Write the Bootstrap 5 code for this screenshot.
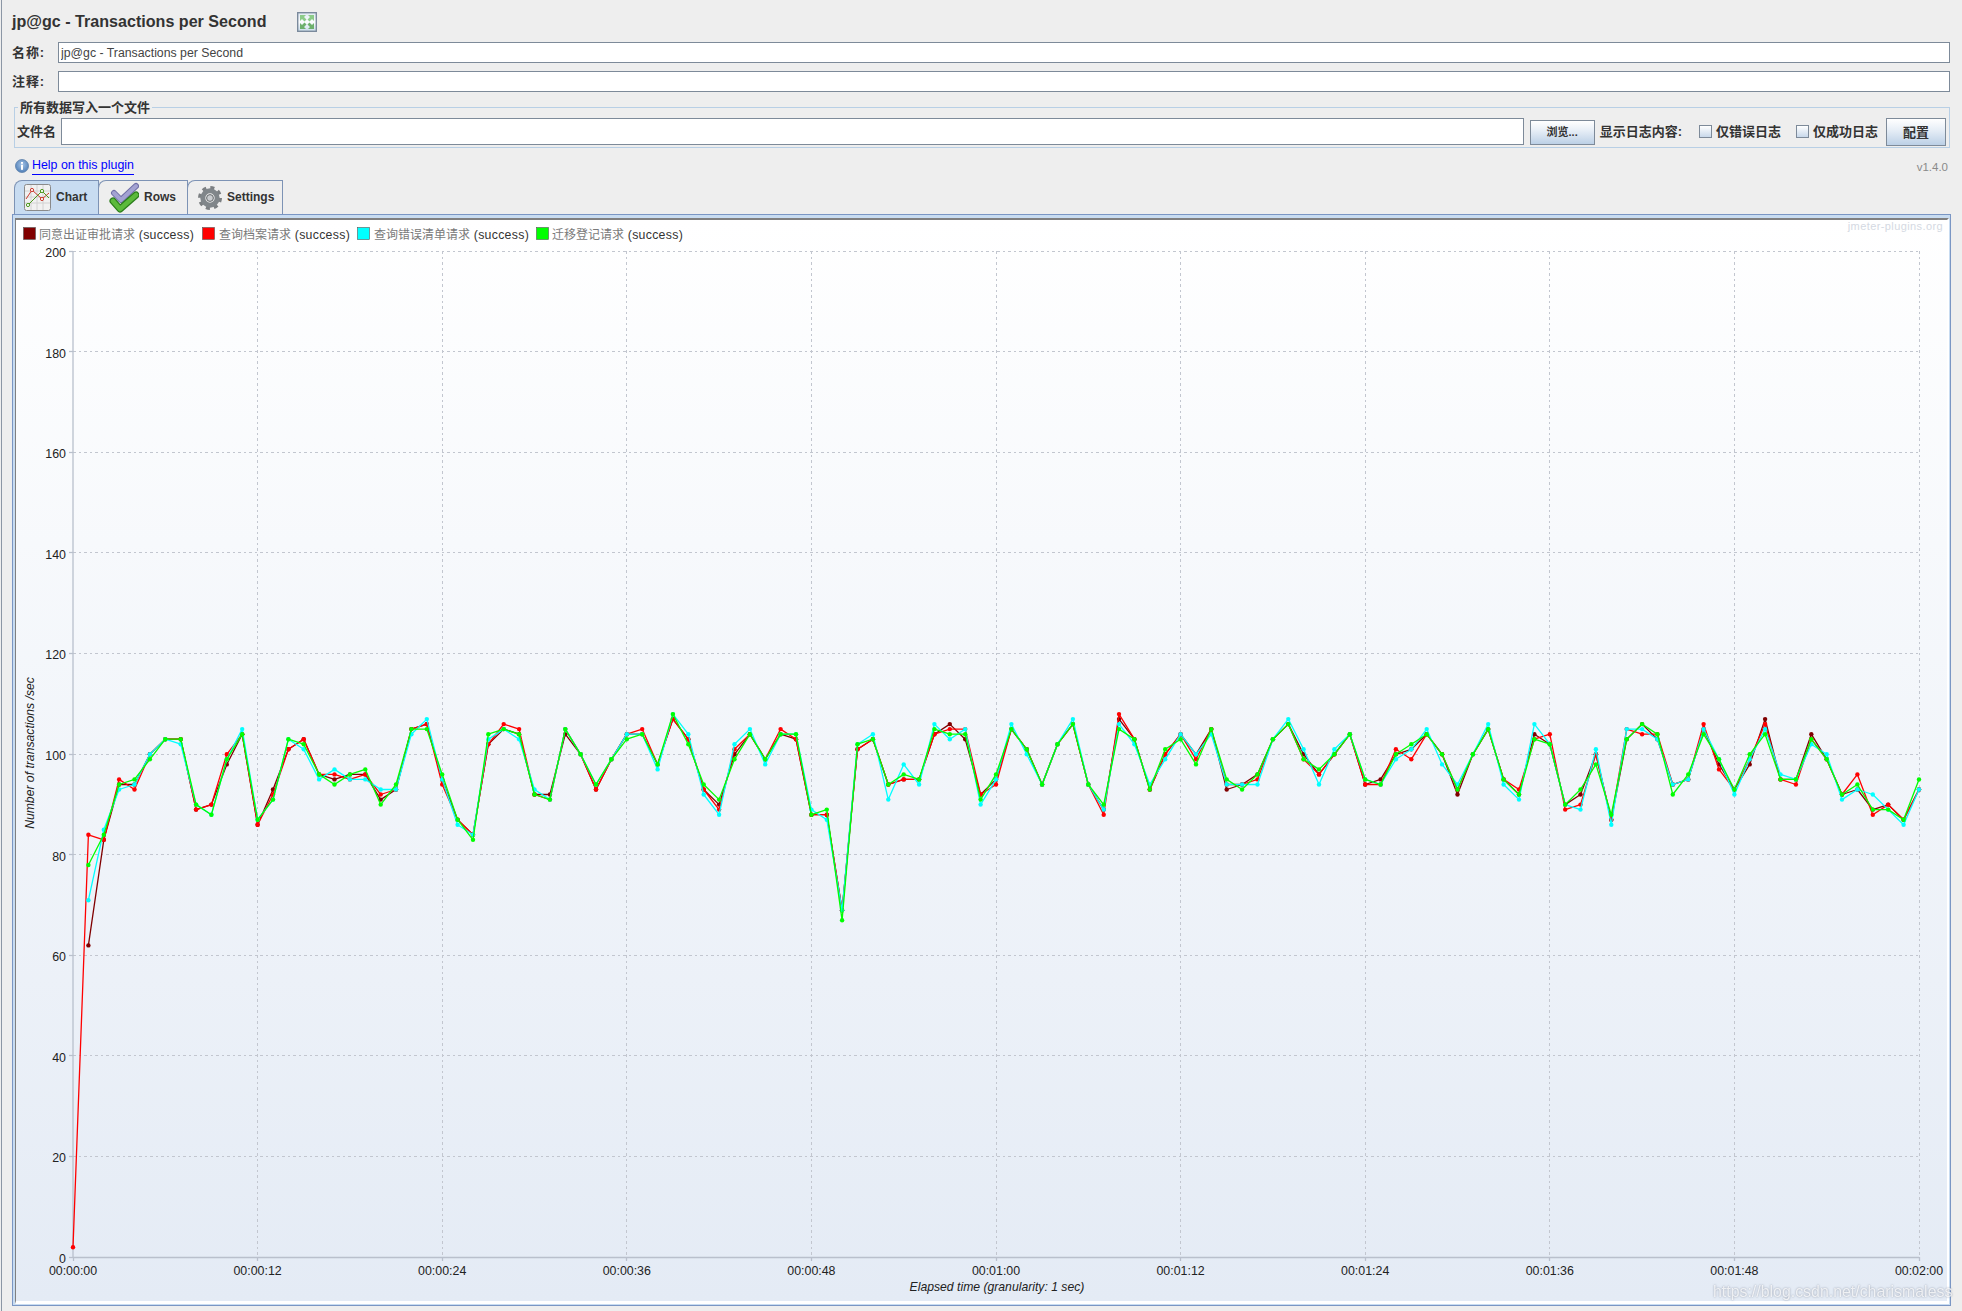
<!DOCTYPE html>
<html lang="zh-CN">
<head>
<meta charset="utf-8">
<title>jp@gc - Transactions per Second</title>
<link href="https://cdn.jsdelivr.net/npm/bootstrap@5.3.0/dist/css/bootstrap.min.css" rel="stylesheet">
<style>
:root{--ui-font:"Liberation Sans","Noto Sans CJK SC",sans-serif}
html,body{height:100%}
body{background:#eee;color:#333;font-family:var(--ui-font);font-size:12px;overflow:hidden;line-height:1.2}
.app-shell{height:1311px;margin-left:1px;border-left:1px solid #8b96a5;padding-left:10px}
.title-row{height:42px;gap:31px;padding-top:1px}
.plugin-title{font-size:16.1px;font-weight:700;margin:0;color:#333}
.expand-icon{width:20px;height:20px;display:block}
.field-row{height:21px;margin-right:12px}
.field-row + .field-row{margin-top:8px}
.field-label{width:46px;font-weight:700;font-size:13px;letter-spacing:.9px;flex:none}
.swing-input.form-control{border:1px solid #7d8a99;border-radius:0;padding:0 2px;height:100%;font-size:12.3px;color:#444;background:#fff;min-height:0;box-shadow:none;font-family:var(--ui-font);line-height:1}
.file-box{position:relative;height:41px;margin:15px 12px 0 2px;border:1px solid #b8cfe5;padding:8px 2px 0 2px;gap:0}
.file-legend{position:absolute;left:3px;top:-8px;padding:0 2px;background:#eee;font-size:13px;font-weight:700;line-height:15px;color:#333}
.file-label{font-size:13px;font-weight:700;width:44px;flex:none}
.swing-input.file-input{height:27px;flex:1 1 auto;width:auto}
.swing-btn.btn{border:1px solid #7d8a99;border-radius:0;padding:0;color:#333;background:linear-gradient(#fff 0%,#e8eff7 40%,#bcd0e6 100%);font-weight:700;font-family:var(--ui-font);line-height:1}
.browse-btn.btn{width:65px;height:25px;font-size:11px;margin-left:6px;margin-right:5px;margin-top:2px}
.config-btn.btn{width:60px;height:28px;font-size:13px;margin-left:8px;margin-right:1px;margin-top:1px}
.log-label{font-size:13px;font-weight:700;white-space:nowrap;color:#333}
.log-check{width:13px;height:13px;flex:none;border:1px solid #7d8a99;background:linear-gradient(#fff,#c8d8ea);margin:0 4px 0 0;border-radius:0;appearance:none;display:block}
.log-check-first{margin-left:17px}
.log-check-second{margin-left:15px}
.help-row{height:32px;margin-right:14px;padding-left:3px}
.info-icon{width:14px;height:14px;margin-top:3px;margin-right:3px;display:block}
.help-link{color:#00f;font-size:12.4px;text-decoration:none;border-bottom:1px solid #00f;padding-bottom:2px;line-height:14px;margin-top:4px}
.help-link:hover{color:#00f}
.version-tag{color:#8a8a8a;font-size:11.5px;margin-top:7px}
.tab-strip{height:34px;padding-left:3px;flex-wrap:nowrap}
.swing-tab{display:flex;align-items:center;height:34px;border:1px solid #7d93b5;border-bottom:0;border-top-left-radius:8px;background:#eee;color:#333;font-weight:700;font-size:12px;text-decoration:none;gap:5px;margin-left:-1px}
.swing-tab:hover{color:#333}
.swing-tab.is-active{background:#c8dcf1}
.tab-chart{width:85px;padding-left:9px}
.tab-rows{width:90px;padding-left:10px}
.tab-settings{width:96px;padding-left:10px}
.tab-panel{flex:1 1 auto;min-height:0;margin:0 11px 5px 0;border:1px solid #7a96c4;padding:3px 1px 1px 2px;background:#c8dcf1}
.chart-frame{height:100%;border-top:2px solid #808080;border-left:1px solid #808080;border-right:2px solid #fff;border-bottom:3px solid #fff;background:#fff;overflow:hidden}
.chart-svg{display:block;width:1931px;height:1081px;font-family:var(--ui-font)}
.grid-line{stroke:#c2c6cf;stroke-width:1;stroke-dasharray:2.5 3;shape-rendering:crispEdges}
.axis-line{stroke:#b9c0cc;stroke-width:1.3}
.tick-text{font-size:12.4px;fill:#222}
.axis-title{font-size:12.2px;font-style:italic;fill:#222}
.legend-cjk{font-size:12px;fill:#7a7a7a}
.legend-latin{font-size:12.3px;fill:#333;letter-spacing:.3px}
.plugins-mark{font-size:11px;fill:#d4d9e2;letter-spacing:.4px}
.csdn-mark{position:fixed;left:1713px;top:1282px;font-size:15.9px;color:rgba(255,255,255,.8);text-shadow:0 0 2px rgba(105,115,135,.75);white-space:nowrap;line-height:20px;pointer-events:none}
</style>
</head>
<body>
<div class="app-shell d-flex flex-column">
  <div class="title-row d-flex align-items-center">
    <h1 class="plugin-title">jp@gc - Transactions per Second</h1>
    <svg class="expand-icon" viewBox="0 0 20 20" aria-hidden="true">
      <defs><linearGradient id="expandBg" x1="0" y1="0" x2="0" y2="1"><stop offset="0" stop-color="#dfe9f2"/><stop offset=".5" stop-color="#fbfdfe"/><stop offset="1" stop-color="#c9dcea"/></linearGradient></defs>
      <rect x=".7" y=".7" width="18.6" height="18.6" fill="url(#expandBg)" stroke="#7b8a9c" stroke-width="1.4"/>
      <g fill="#8ccb88">
        <path d="M3 3h6l-2 2 2.500 2.500-2 2L5 7 3 9z"/>
        <path d="M17 3h-6l2 2-2.500 2.500 2 2L15 7l2 2z"/>
      </g>
      <g fill="#6db06c">
        <path d="M3 17h6l-2-2 2.500-2.500-2-2L5 13l-2-2z"/>
        <path d="M17 17h-6l2-2-2.500-2.500 2-2L15 13l2-2z"/>
      </g>
    </svg>
  </div>

  <div class="field-row d-flex align-items-center">
    <label class="field-label" for="nameField">名称:</label>
    <input id="nameField" class="form-control swing-input" type="text" value="jp@gc - Transactions per Second">
  </div>
  <div class="field-row d-flex align-items-center">
    <label class="field-label" for="noteField">注释:</label>
    <input id="noteField" class="form-control swing-input" type="text">
  </div>

  <div class="file-box d-flex align-items-center">
    <div class="file-legend">所有数据写入一个文件</div>
    <label class="file-label" for="fileField">文件名</label>
    <input id="fileField" class="form-control swing-input file-input" type="text">
    <button class="btn swing-btn browse-btn" type="button">浏览...</button>
    <span class="log-label">显示日志内容:</span>
    <input class="log-check log-check-first" type="checkbox" aria-label="仅错误日志">
    <span class="log-label">仅错误日志</span>
    <input class="log-check log-check-second" type="checkbox" aria-label="仅成功日志">
    <span class="log-label">仅成功日志</span>
    <button class="btn swing-btn config-btn" type="button">配置</button>
  </div>

  <div class="help-row d-flex align-items-center">
    <svg class="info-icon" viewBox="0 0 14 14" aria-hidden="true">
      <defs><radialGradient id="infoBg" cx=".5" cy=".4" r=".6"><stop offset="0" stop-color="#a6c4e6"/><stop offset="1" stop-color="#4f7fb8"/></radialGradient></defs>
      <circle cx="7" cy="7" r="6.500" fill="url(#infoBg)" stroke="#5c7fa8" stroke-width=".8"/>
      <rect x="6" y="3" width="2" height="1.800" fill="#fff"/>
      <rect x="6" y="5.800" width="2" height="5" fill="#fff"/>
    </svg>
    <a class="help-link" href="#">Help on this plugin</a>
    <span class="version-tag ms-auto">v1.4.0</span>
  </div>

  <nav class="tab-strip d-flex">
    <a class="swing-tab tab-chart is-active" href="#">
      <svg width="27" height="27" viewBox="0 0 27 27" aria-hidden="true">
        <rect x=".5" y=".5" width="26" height="26" rx="2" fill="#f1f1f1" stroke="#8a8a8a"/>
        <path d="M1 7h25M1 13h25M1 19h25M7 1v25M13 1v25M19 1v25" stroke="#d2d2d2" stroke-width="1"/>
        <polyline points="2,15 8,6 18,15 25,9" fill="none" stroke="#cc3b2e" stroke-width="1"/>
        <polyline points="4,21 11,14 18,7 25,14" fill="none" stroke="#4d9a1f" stroke-width="1"/>
        <circle cx="8" cy="6" r="1.600" fill="#fff" stroke="#cc3b2e"/>
        <circle cx="18" cy="15" r="1.600" fill="#fff" stroke="#cc3b2e"/>
        <circle cx="4" cy="21" r="1.600" fill="#fff" stroke="#4d9a1f"/>
        <circle cx="18" cy="7" r="1.600" fill="#fff" stroke="#4d9a1f"/>
      </svg>
      <span>Chart</span>
    </a>
    <a class="swing-tab tab-rows" href="#">
      <svg width="30" height="31" viewBox="0 0 30 31" aria-hidden="true">
        <path d="M5 11l7 7L27 4" fill="none" stroke="#6f6ea6" stroke-width="6" stroke-linecap="round" stroke-linejoin="round"/>
        <path d="M5 11l7 7L27 4" fill="none" stroke="#a3a2d2" stroke-width="4" stroke-linecap="round" stroke-linejoin="round"/>
        <path d="M4 19l7 8L27 13" fill="none" stroke="#2b7d1c" stroke-width="7" stroke-linecap="round" stroke-linejoin="round"/>
        <path d="M4 19l7 8L27 13" fill="none" stroke="#5cba3c" stroke-width="4.500" stroke-linecap="round" stroke-linejoin="round"/>
      </svg>
      <span>Rows</span>
    </a>
    <a class="swing-tab tab-settings" href="#">
      <svg width="24" height="24" viewBox="0 0 24 24" aria-hidden="true">
        <circle cx="12" cy="12" r="10.300" fill="none" stroke="#7b7f82" stroke-width="3.400" stroke-dasharray="4 4.090"/>
        <circle cx="12" cy="12" r="7.200" fill="none" stroke="#80868a" stroke-width="5"/>
        <circle cx="12" cy="12" r="3.400" fill="#c9cccf" stroke="#63686b" stroke-width="1"/>
      </svg>
      <span>Settings</span>
    </a>
  </nav>

  <section class="tab-panel">
    <div class="chart-frame">
      <svg class="chart-svg" id="tpsChart" viewBox="16 220 1931 1081" role="img" aria-label="Transactions per second chart">
        <defs><linearGradient id="plotBg" x1="0" y1="0" x2="0" y2="1"><stop offset="0" stop-color="#fff"/><stop offset="1" stop-color="#e4ebf5"/></linearGradient></defs>
        <rect x="16" y="220" width="1931" height="1081" fill="url(#plotBg)"/>
        <text class="plugins-mark" x="1943" y="230" text-anchor="end">jmeter-plugins.org</text>

        <g>
          <rect x="23.500" y="227.500" width="12" height="12" fill="#800000" stroke="#555" stroke-width=".6"/>
          <text x="39" y="239"><tspan class="legend-cjk">同意出证审批请求</tspan><tspan class="legend-latin"> (success)</tspan></text>
          <rect x="202.500" y="227.500" width="12" height="12" fill="#f00" stroke="#555" stroke-width=".6"/>
          <text x="219" y="239"><tspan class="legend-cjk">查询档案请求</tspan><tspan class="legend-latin"> (success)</tspan></text>
          <rect x="357.500" y="227.500" width="12" height="12" fill="#0ff" stroke="#555" stroke-width=".6"/>
          <text x="374" y="239"><tspan class="legend-cjk">查询错误清单请求</tspan><tspan class="legend-latin"> (success)</tspan></text>
          <rect x="536.500" y="227.500" width="12" height="12" fill="#0f0" stroke="#555" stroke-width=".6"/>
          <text x="552" y="239"><tspan class="legend-cjk">迁移登记请求</tspan><tspan class="legend-latin"> (success)</tspan></text>
        </g>

        <g id="gridLayer"></g>
        <line class="axis-line" x1="73" y1="251" x2="73" y2="1257"/>
        <line class="axis-line" x1="73" y1="1257.500" x2="1919" y2="1257.500"/>

        <g class="tick-text" text-anchor="end">
          <text x="66" y="257">200</text><text x="66" y="357.600">180</text><text x="66" y="458.200">160</text><text x="66" y="558.800">140</text><text x="66" y="659.400">120</text><text x="66" y="760">100</text><text x="66" y="860.600">80</text><text x="66" y="961.200">60</text><text x="66" y="1061.800">40</text><text x="66" y="1162.400">20</text><text x="66" y="1263">0</text>
        </g>
        <g class="tick-text" text-anchor="middle">
          <text x="73" y="1275">00:00:00</text><text x="257.600" y="1275">00:00:12</text><text x="442.200" y="1275">00:00:24</text><text x="626.800" y="1275">00:00:36</text><text x="811.400" y="1275">00:00:48</text><text x="996" y="1275">00:01:00</text><text x="1180.600" y="1275">00:01:12</text><text x="1365.200" y="1275">00:01:24</text><text x="1549.800" y="1275">00:01:36</text><text x="1734.400" y="1275">00:01:48</text><text x="1919" y="1275">00:02:00</text>
        </g>
        <text class="axis-title" x="997" y="1291" text-anchor="middle">Elapsed time (granularity: 1 sec)</text>
        <text class="axis-title" transform="translate(34 753) rotate(-90)" text-anchor="middle">Number of transactions /sec</text>
        <g id="seriesLayer"></g>
      </svg>
    </div>
  </section>
</div>
<div class="csdn-mark">https://blog.csdn.net/charismaless</div>

<script src="https://cdn.jsdelivr.net/npm/bootstrap@5.3.0/dist/js/bootstrap.bundle.min.js"></script>
<script>
(function(){
  var NS='http://www.w3.org/2000/svg';
  var X0=73,PX=15.383,Y0=1257.3,PY=5.03;
  var rows=[
  [62,84,71,78],[83,83,85,84],[94,95,93,94],[94,93,94,95],[100,100,100,99],[103,103,103,103],[103,103,102,103],[89,89,90,90],[90,90,88,88],[98,100,99,99],
  [104,104,105,104],[86,86,87,87],[93,92,91,91],[101,101,103,103],[103,103,101,102],[96,96,95,96],[95,96,97,94],[96,95,95,96],[96,96,95,97],[91,92,93,90],
  [93,93,93,94],[105,105,104,105],[106,106,107,105],[95,94,95,96],[87,87,86,87],[84,84,84,83],[102,102,103,104],[105,106,105,105],[104,105,103,104],[92,92,93,92],
  [92,91,91,91],[104,105,105,105],[100,100,100,100],[93,93,94,94],[99,99,99,99],[104,104,104,103],[104,105,104,104],[98,98,97,98],[107,107,108,108],[103,103,104,102],
  [93,93,92,94],[90,89,88,91],[100,101,102,99],[104,104,105,104],[99,99,98,99],[104,105,104,104],[103,103,104,104],[88,88,89,88],[88,88,87,89],[69,69,69,67],
  [101,101,102,102],[103,103,104,103],[94,94,91,94],[95,95,98,96],[95,95,94,95],[104,104,106,105],[106,105,103,104],[103,105,105,104],[92,92,90,91],[95,94,95,96],
  [105,105,106,105],[101,101,100,101],[94,94,94,94],[102,102,102,102],[106,106,107,106],[94,94,94,94],[89,88,89,90],[107,108,106,105],[103,103,102,103],[93,93,94,93],
  [100,100,99,101],[104,104,104,103],[100,99,100,98],[105,105,104,105],[93,94,94,95],[94,94,94,93],[96,95,94,96],[103,103,103,103],[106,106,107,106],[100,99,101,99],
  [96,96,94,97],[100,100,101,100],[104,104,104,104],[94,94,95,95],[95,94,94,94],[100,101,99,100],[101,99,101,102],[104,104,105,104],[100,100,98,100],[92,93,94,93],
  [100,100,100,100],[105,105,106,105],[95,95,94,95],[92,93,91,92],[104,103,106,103],[102,104,102,102],[90,89,90,90],[92,90,89,93],[100,100,101,98],[87,87,86,88],
  [103,105,105,103],[106,104,105,106],[103,104,103,104],[94,94,94,92],[95,95,95,96],[105,106,105,104],[98,97,99,99],[93,93,92,93],[98,99,99,100],[107,106,105,104],
  [95,95,96,95],[95,94,95,95],[104,103,102,103],[99,99,100,99],[92,92,91,92],[93,96,93,94],[89,88,92,89],[90,90,89,89],[87,87,86,87],[93,93,93,95]];
  var colors=['#800000','#ff0000','#00ffff','#00ff00'];
  function el(name,attrs,parent){var n=document.createElementNS(NS,name);for(var k in attrs){n.setAttribute(k,attrs[k]);}parent.appendChild(n);return n;}
  var grid=document.getElementById('gridLayer');
  for(var i=0;i<=10;i++){
    var y=Math.floor(251+i*100.6)+.5;
    if(i<10){el('line',{'class':'grid-line',x1:73,y1:y,x2:1919,y2:y},grid);}
    el('line',{'class':'axis-line',x1:69,y1:y,x2:73,y2:y,'stroke-width':1},grid);
    var x=Math.floor(73+i*184.6)+.5;
    if(i>0){el('line',{'class':'grid-line',x1:x,y1:251,x2:x,y2:1257},grid);}
    el('line',{'class':'axis-line',x1:x,y1:1257,x2:x,y2:1261,'stroke-width':1},grid);
  }
  var layer=document.getElementById('seriesLayer');
  colors.forEach(function(c,s){
    var pts=[];
    if(s===1){pts.push([X0,Y0-2*PY]);}
    rows.forEach(function(r,t){pts.push([X0+(t+1)*PX,Y0-r[s]*PY]);});
    el('polyline',{points:pts.map(function(p){return p[0].toFixed(1)+','+p[1].toFixed(1);}).join(' '),fill:'none',stroke:c,'stroke-width':1.3,'stroke-linejoin':'round'},layer);
    pts.forEach(function(p){el('circle',{cx:p[0].toFixed(1),cy:p[1].toFixed(1),r:2.2,fill:c},layer);});
  });
})();
</script>
</body>
</html>
